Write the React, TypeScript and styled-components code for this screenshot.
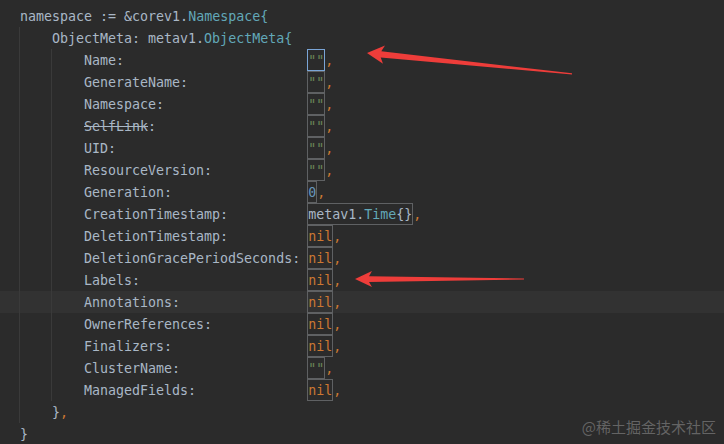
import styled, { createGlobalStyle } from "styled-components";

const GlobalStyle = createGlobalStyle`
  html, body {
    margin: 0;
    padding: 0;
    background: #2b2b2b;
  }
`;

const Editor = styled.div`
  position: relative;
  isolation: isolate;
  width: 724px;
  height: 444px;
  overflow: hidden;
  box-sizing: border-box;
  padding: 5px 0 0 20px;
  background: #2b2b2b;
  font-family: "DejaVu Sans Mono", "Liberation Mono", monospace;
  font-size: 13.3px;
  color: #a9b7c6;
`;

const Block = styled.div`
  margin-left: -1px;
  padding-left: 32px;
  border-left: 1px solid #3a3a3a;
`;

const Row = styled.div<{ $active?: boolean }>`
  position: relative;
  height: 22px;
  display: flex;
  align-items: center;
  white-space: pre;
  &::before {
    content: "";
    display: ${props => (props.$active ? "block" : "none")};
    position: absolute;
    top: 0;
    bottom: 0;
    left: -200px;
    right: -800px;
    background: #323232;
    z-index: -1;
  }
`;

const Key = styled.span`
  display: inline-block;
  width: 28ch;
`;

const Struck = styled.span`
  text-decoration: line-through;
`;

const Type = styled.span`
  color: #62a8b8;
`;

const Str = styled.span`
  color: #6a8759;
`;

const Num = styled.span`
  color: #6897bb;
`;

const Kw = styled.span`
  color: #cc7832;
`;

const Box = styled.span<{ $focus?: boolean }>`
  display: inline-flex;
  align-items: center;
  height: 22px;
  box-sizing: border-box;
  margin-left: -1px;
  border: 1px solid ${props => (props.$focus ? "#7aa5d6" : "#5f6163")};
`;

const Arrows = styled.svg`
  position: absolute;
  left: 0;
  top: 0;
  pointer-events: none;
`;

const Watermark = styled.div`
  position: absolute;
  right: 8px;
  bottom: 7px;
  font-family: "Noto Sans CJK SC", "Noto Sans", sans-serif;
  font-size: 15px;
  color: rgba(120, 120, 120, 0.75);
`;

type Kind = "str" | "num" | "nil" | "time";

interface IField {
  name: string;
  kind: Kind;
  struck?: boolean;
}

const fields: IField[] = [
  { name: "Name", kind: "str" },
  { name: "GenerateName", kind: "str" },
  { name: "Namespace", kind: "str" },
  { name: "SelfLink", kind: "str", struck: true },
  { name: "UID", kind: "str" },
  { name: "ResourceVersion", kind: "str" },
  { name: "Generation", kind: "num" },
  { name: "CreationTimestamp", kind: "time" },
  { name: "DeletionTimestamp", kind: "nil" },
  { name: "DeletionGracePeriodSeconds", kind: "nil" },
  { name: "Labels", kind: "nil" },
  { name: "Annotations", kind: "nil" },
  { name: "OwnerReferences", kind: "nil" },
  { name: "Finalizers", kind: "nil" },
  { name: "ClusterName", kind: "str" },
  { name: "ManagedFields", kind: "nil" },
];

function Value({ kind }: { kind: Kind }) {
  if (kind === "str") return <Str>""</Str>;
  if (kind === "num") return <Num>0</Num>;
  if (kind === "nil") return <Kw>nil</Kw>;
  return (
    <span>
      metav1.<Type>Time</Type>{"{}"}
    </span>
  );
}

function App() {
  return (
    <Editor>
      <GlobalStyle />
      <Row>
        namespace := &corev1.<Type>Namespace{"{"}</Type>
      </Row>
      <Block>
        <Row>
          ObjectMeta: metav1.<Type>ObjectMeta{"{"}</Type>
        </Row>
        <Block>
          {fields.map((f, i) => (
            <Row key={f.name} $active={f.name === "Annotations"}>
              <Key>
                {f.struck ? <Struck>{f.name}</Struck> : f.name}:
              </Key>
              <Box $focus={i === 0}>
                <Value kind={f.kind} />
              </Box>
              <Kw>,</Kw>
            </Row>
          ))}
        </Block>
        <Row>
          {"}"}
          <Kw>,</Kw>
        </Row>
      </Block>
      <Row>{"}"}</Row>

      <Arrows width="724" height="444" viewBox="0 0 724 444">
        <path
          d="M367,53 L385,45.5 L381.3,51.3 L572,73.3 L572,74.5 L380.7,57.6 L383,63.8 Z"
          fill="#ee3d3a"
        />
        <path
          d="M355,279 L372,271 L369,276.2 L524,278.4 L524,279.6 L369,282 L372,287 Z"
          fill="#ee3d3a"
        />
      </Arrows>
      <Watermark>@稀土掘金技术社区</Watermark>
    </Editor>
  );
}

export default App;
